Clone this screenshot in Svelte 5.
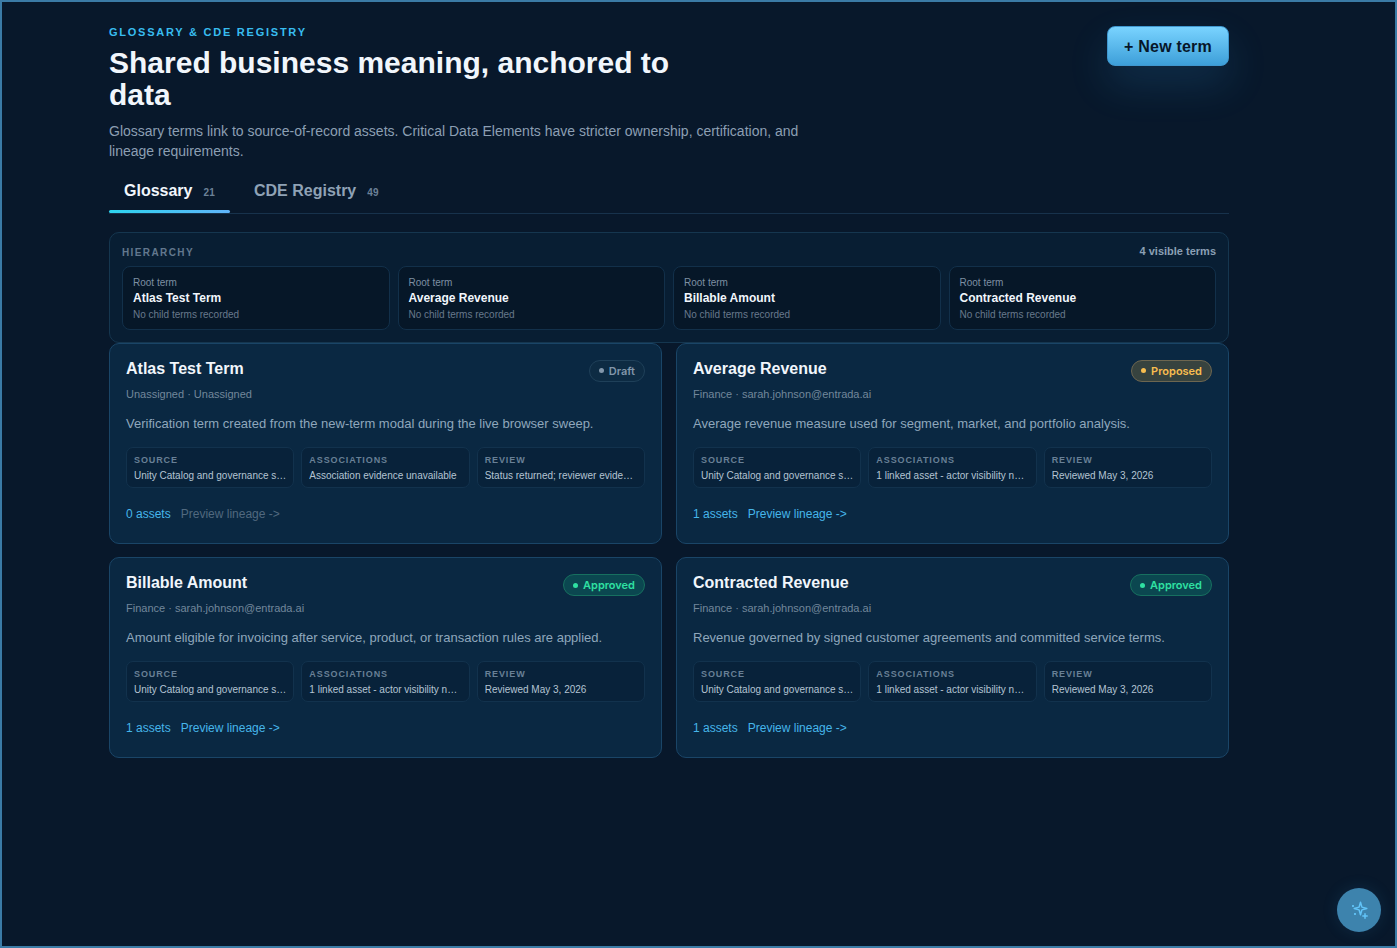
<script>
  const roots = ['Atlas Test Term', 'Average Revenue', 'Billable Amount', 'Contracted Revenue'];

  const source = 'Unity Catalog and governance source of record';
  const linked = '1 linked asset - actor visibility not available';
  const owner = 'Finance · sarah.johnson@entrada.ai';

  const terms = [
    {
      name: 'Atlas Test Term',
      owner: 'Unassigned · Unassigned',
      status: 'Draft',
      desc: 'Verification term created from the new-term modal during the live browser sweep.',
      assoc: 'Association evidence unavailable',
      review: 'Status returned; reviewer evidence unavailable',
      assets: 0
    },
    {
      name: 'Average Revenue',
      owner,
      status: 'Proposed',
      desc: 'Average revenue measure used for segment, market, and portfolio analysis.',
      assoc: linked,
      review: 'Reviewed May 3, 2026',
      assets: 1
    },
    {
      name: 'Billable Amount',
      owner,
      status: 'Approved',
      desc: 'Amount eligible for invoicing after service, product, or transaction rules are applied.',
      assoc: linked,
      review: 'Reviewed May 3, 2026',
      assets: 1
    },
    {
      name: 'Contracted Revenue',
      owner,
      status: 'Approved',
      desc: 'Revenue governed by signed customer agreements and committed service terms.',
      assoc: linked,
      review: 'Reviewed May 3, 2026',
      assets: 1
    }
  ];
</script>

<div class="frame">
  <main class="page">
    <header class="head">
      <div class="intro">
        <div class="eyebrow">GLOSSARY &amp; CDE REGISTRY</div>
        <h1>Shared business meaning, anchored to data</h1>
        <p>Glossary terms link to source-of-record assets. Critical Data Elements have stricter ownership, certification, and lineage requirements.</p>
      </div>
      <button class="new">+ New term</button>
    </header>

    <nav class="tabs">
      <button class="tab active">Glossary <span>21</span></button>
      <button class="tab">CDE Registry <span>49</span></button>
    </nav>

    <section class="hierarchy">
      <div class="h-top">
        <span class="h-label">HIERARCHY</span>
        <span class="h-count">4 visible terms</span>
      </div>
      <div class="roots">
        {#each roots as r}
          <div class="root">
            <div class="r-kind">Root term</div>
            <div class="r-name">{r}</div>
            <div class="r-note">No child terms recorded</div>
          </div>
        {/each}
      </div>
    </section>

    <section class="grid">
      {#each terms as t}
        <article class="card">
          <div class="c-top">
            <h2>{t.name}</h2>
            <span class="badge {t.status.toLowerCase()}"><i></i>{t.status}</span>
          </div>
          <div class="c-owner">{t.owner}</div>
          <p class="c-desc">{t.desc}</p>
          <div class="minis">
            <div class="mini"><b>SOURCE</b><span>{source}</span></div>
            <div class="mini"><b>ASSOCIATIONS</b><span>{t.assoc}</span></div>
            <div class="mini"><b>REVIEW</b><span>{t.review}</span></div>
          </div>
          <div class="c-foot">
            <span class="link">{t.assets} assets</span>
            <span class="link" class:off={t.assets === 0}>Preview lineage -&gt;</span>
          </div>
        </article>
      {/each}
    </section>
  </main>

  <button class="fab" aria-label="Assistant">
    <svg width="20" height="20" viewBox="0 0 20 20" fill="none" stroke="#62c4f8" stroke-width="1.5" stroke-linejoin="round" stroke-linecap="round">
      <path d="M11.5 2.2 L12.9 7.1 L17.8 8.5 L12.9 9.9 L11.5 14.8 L10.1 9.9 L5.2 8.5 L10.1 7.1 Z" />
      <path d="M16 13.8v4.4M13.8 16h4.4" />
      <path d="M3.8 6h.4M5.8 14h.4" stroke-width="1.8" />
    </svg>
  </button>
</div>

<style>
  :global(body) {
    margin: 0;
    background: #08182b;
  }

  .frame {
    box-sizing: border-box;
    position: relative;
    height: 948px;
    border: 2px solid #3b7ba6;
    background: #08182b;
    font-family: "Liberation Sans", Arial, sans-serif;
    color: #f1f6fc;
    overflow: hidden;
  }

  .page {
    width: 1120px;
    margin-left: 107px;
    padding-top: 24px;
  }

  .head {
    display: flex;
    justify-content: space-between;
    align-items: flex-start;
  }

  .intro {
    width: 720px;
  }

  .eyebrow {
    font-size: 11px;
    line-height: 13px;
    font-weight: 700;
    letter-spacing: 0.16em;
    color: #38bdf0;
  }

  h1 {
    margin: 8px 0 0;
    width: 600px;
    font-size: 30px;
    line-height: 32px;
    font-weight: 700;
    color: #f1f6fc;
  }

  .intro p {
    margin: 10px 0 0;
    font-size: 14px;
    line-height: 20px;
    color: #8c9fb3;
  }

  .new {
    width: 122px;
    height: 40px;
    border: 1px solid #3f97cf;
    border-radius: 8px;
    background: linear-gradient(180deg, #79d3ff, #3d9fd9);
    box-shadow: 0 18px 40px rgba(56, 170, 240, 0.16);
    color: #071629;
    font: 700 16px "Liberation Sans", Arial, sans-serif;
    letter-spacing: 0.2px;
    padding: 1px 0 0;
  }

  .tabs {
    display: flex;
    gap: 9px;
    margin-top: 8px;
    border-bottom: 1px solid #17324c;
    height: 44px;
  }

  .tab {
    position: relative;
    background: none;
    border: none;
    padding: 0 15px;
    height: 44px;
    display: flex;
    align-items: center;
    gap: 9px;
    font: 700 16px "Liberation Sans", Arial, sans-serif;
    color: #8fa2b6;
  }

  .tab span {
    font-size: 10px;
    font-weight: 700;
    letter-spacing: 0.02em;
    color: #6c8197;
    margin-top: 3px;
    margin-left: 2px;
  }

  .tab.active {
    color: #f1f6fc;
    width: 121px;
    box-sizing: border-box;
  }

  .tab.active::after {
    content: "";
    position: absolute;
    left: 0;
    right: 0;
    bottom: 0;
    height: 3px;
    border-radius: 2px;
    background: linear-gradient(90deg, #2dd4ee, #60b4fa);
  }

  .hierarchy {
    box-sizing: border-box;
    height: 111.2px;
    margin-top: 18px;
    padding: 12px;
    border: 1px solid #15364f;
    border-radius: 10px;
    background: #081e33;
  }

  .h-top {
    display: flex;
    justify-content: space-between;
    align-items: center;
    height: 14px;
    margin-bottom: 7px;
  }

  .h-label {
    font-size: 10px;
    font-weight: 700;
    letter-spacing: 0.14em;
    color: #62788e;
  }

  .h-count {
    font-size: 11px;
    font-weight: 700;
    color: #8ba0b5;
    margin-bottom: 2px;
  }

  .roots {
    display: grid;
    grid-template-columns: repeat(4, 1fr);
    gap: 8px;
  }

  .root {
    box-sizing: border-box;
    height: 64px;
    padding: 10px;
    border: 1px solid #12304a;
    border-radius: 8px;
    background: #061728;
  }

  .r-kind,
  .r-note {
    font-size: 10px;
    line-height: 12px;
    color: #68798c;
  }

  .r-kind {
    color: #7d8fa2;
  }

  .r-name {
    font-size: 12px;
    line-height: 17px;
    font-weight: 700;
    color: #f1f6fc;
    margin-top: 1px;
  }

  .r-note {
    margin-top: 2px;
  }

  .grid {
    display: grid;
    grid-template-columns: 1fr 1fr;
    grid-auto-rows: 200.5px;
    column-gap: 14px;
    row-gap: 13.8px;
  }

  .card {
    box-sizing: border-box;
    padding: 15.8px 16px 16px;
    border: 1px solid #1a4567;
    border-radius: 10px;
    background: #0a2842;
    display: flex;
    flex-direction: column;
  }

  .c-top {
    display: flex;
    justify-content: space-between;
    align-items: flex-start;
    height: 26px;
  }

  h2 {
    margin: 0.2px 0 0;
    font-size: 16px;
    line-height: 18px;
    font-weight: 700;
    color: #f1f6fc;
  }

  .badge {
    box-sizing: border-box;
    display: inline-flex;
    align-items: center;
    gap: 5px;
    height: 22px;
    padding: 0 9px;
    border-radius: 11px;
    border: 1px solid;
    font-family: Inter, "Liberation Sans", sans-serif;
    font-size: 11px;
    font-weight: 600;
  }

  .badge i {
    width: 5px;
    height: 5px;
    border-radius: 50%;
    background: currentColor;
  }

  .badge.draft {
    color: #8297ab;
    border-color: #1f4059;
    background: #0d2b43;
  }

  .badge.proposed {
    color: #f7bd4f;
    border-color: #6d6650;
    background: #37433f;
  }

  .badge.approved {
    color: #2fe0a2;
    border-color: #17705f;
    background: #0b4750;
  }

  .c-owner {
    font-size: 11px;
    line-height: 14px;
    color: #72879b;
    margin-top: 1px;
  }

  .c-desc {
    margin: 15px 0 0;
    font-size: 13px;
    line-height: 16px;
    color: #8fa7bc;
  }

  .minis {
    display: grid;
    grid-template-columns: repeat(3, minmax(0, 1fr));
    gap: 7px;
    margin-top: 15px;
  }

  .mini {
    box-sizing: border-box;
    height: 41px;
    padding: 7px;
    border: 1px solid #12324d;
    border-radius: 7px;
    background: #08223a;
    min-width: 0;
  }

  .mini b {
    display: block;
    font-size: 9px;
    line-height: 11px;
    font-weight: 700;
    letter-spacing: 0.1em;
    color: #688096;
  }

  .mini span {
    display: block;
    margin-top: 3px;
    font-size: 10px;
    line-height: 13px;
    color: #b4c4d3;
    white-space: nowrap;
    overflow: hidden;
    text-overflow: ellipsis;
  }

  .c-foot {
    display: flex;
    gap: 10px;
    margin-top: 18px;
    font-size: 12px;
    line-height: 16px;
  }

  .link {
    color: #46b6ea;
  }

  .link.off {
    color: #51697f;
  }

  .fab {
    position: absolute;
    right: 14px;
    bottom: 14px;
    width: 44px;
    height: 44px;
    padding: 0;
    border: none;
    border-radius: 50%;
    background: #3d83ad;
    box-shadow: 0 0 16px rgba(56, 150, 210, 0.15);
    display: flex;
    align-items: center;
    justify-content: center;
  }
</style>
